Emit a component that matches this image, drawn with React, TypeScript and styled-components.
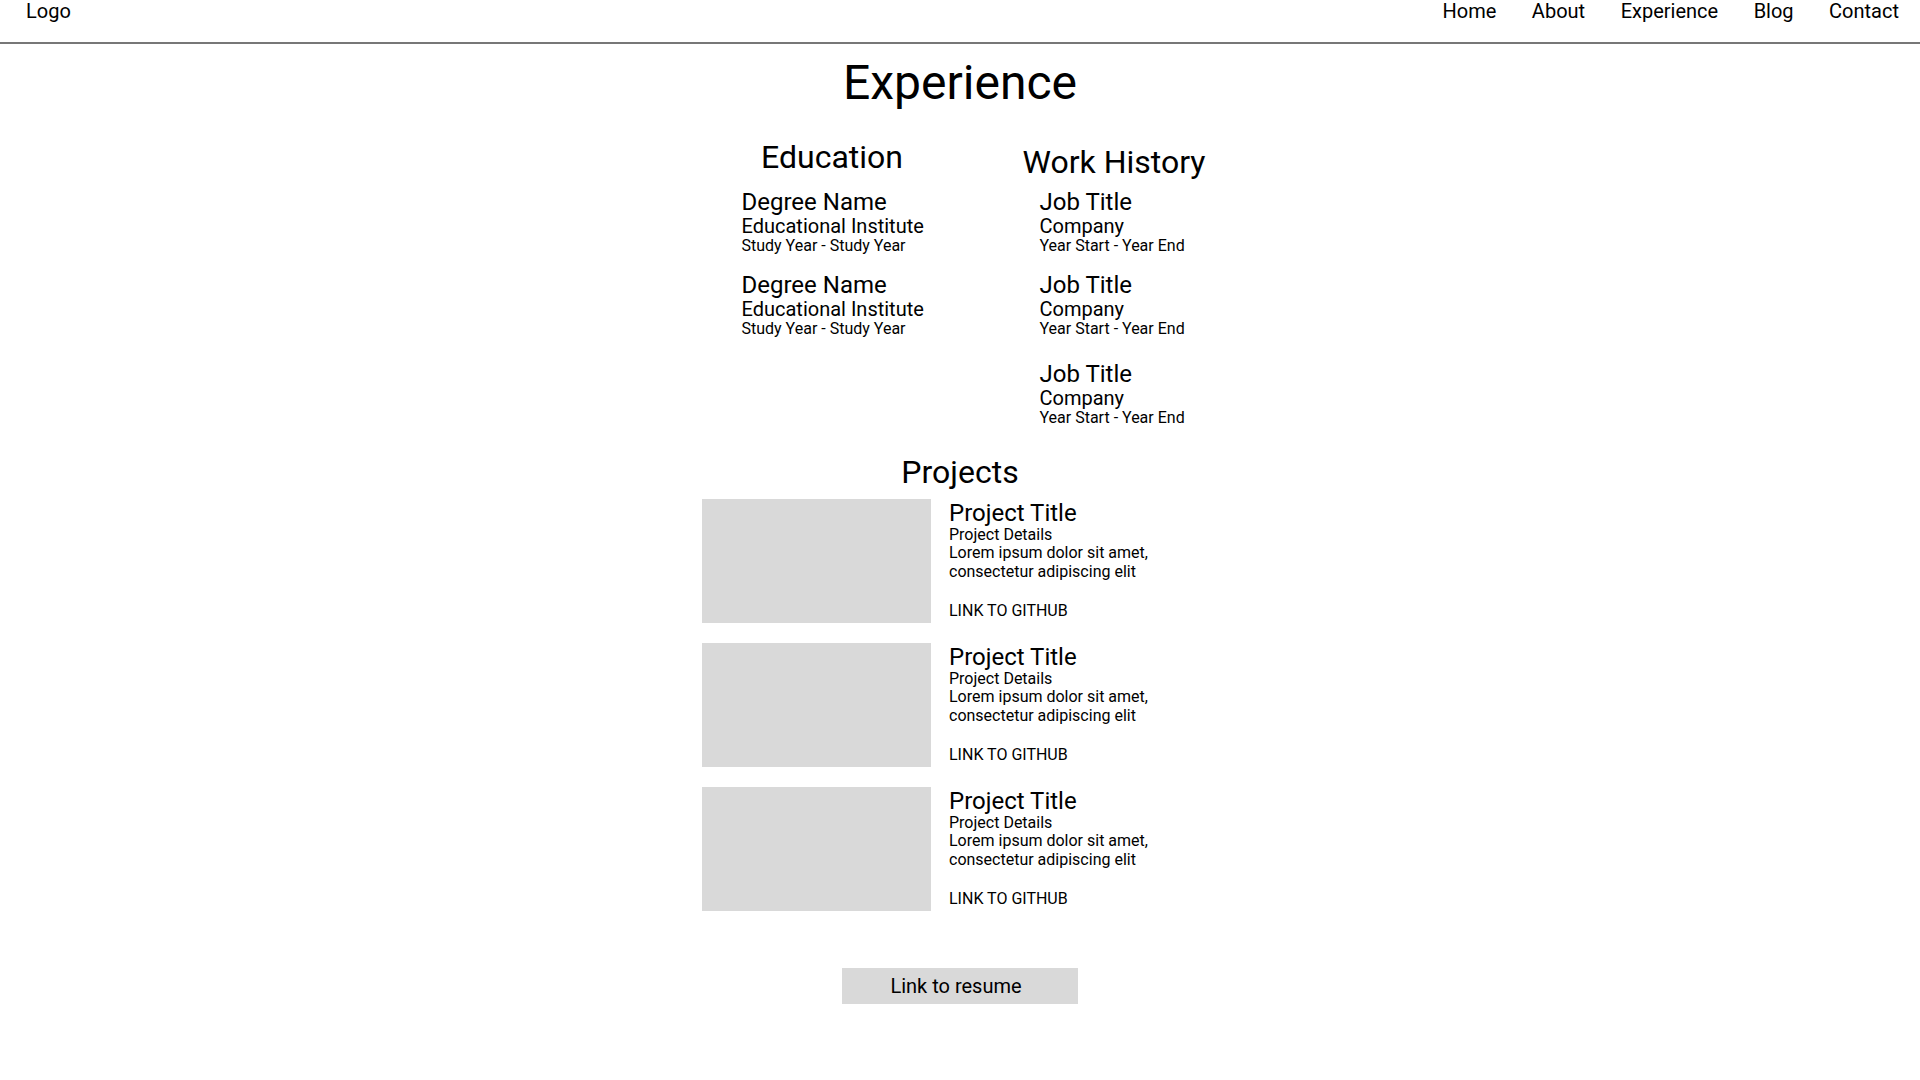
import React from 'react';
import styled, { createGlobalStyle } from 'styled-components';

const GlobalStyle = createGlobalStyle`
  html, body {
    margin: 0;
    padding: 0;
    background: #ffffff;
  }
  body {
    font-family: Roboto, "Liberation Sans", Arial, sans-serif;
    color: #000000;
  }
`;

type Education = { degree: string; institute: string; years: string };
type Job = { title: string; company: string; years: string; extraSpace?: boolean };
type Project = { title: string; details: string; description: string };

const educations: Education[] = [
  { degree: 'Degree Name', institute: 'Educational Institute', years: 'Study Year - Study Year' },
  { degree: 'Degree Name', institute: 'Educational Institute', years: 'Study Year - Study Year' },
];

const jobs: Job[] = [
  { title: 'Job Title', company: 'Company', years: 'Year Start - Year End' },
  { title: 'Job Title', company: 'Company', years: 'Year Start - Year End' },
  { title: 'Job Title', company: 'Company', years: 'Year Start - Year End', extraSpace: true },
];

const projects: Project[] = Array.from({ length: 3 }, () => ({
  title: 'Project Title',
  details: 'Project Details',
  description: 'Lorem ipsum dolor sit amet, consectetur adipiscing elit',
}));

const navLinks = ['Home', 'About', 'Experience', 'Blog', 'Contact'];

const App = () => {
  return (
    <>
      <GlobalStyle />
      <Header>
        <Logo>Logo</Logo>
        <Nav>
          {navLinks.map((link) => (
            <NavLink key={link}>{link}</NavLink>
          ))}
        </Nav>
      </Header>

      <Main>
        <PageTitle>Experience</PageTitle>

        <History>
          <ColumnHeading>Education</ColumnHeading>
          <ColumnHeading $offset={5}>Work History</ColumnHeading>

          <EntryList>
            {educations.map((item, i) => (
              <Entry key={i}>
                <EntryTitle>{item.degree}</EntryTitle>
                <EntrySubtitle>{item.institute}</EntrySubtitle>
                <EntryYears>{item.years}</EntryYears>
              </Entry>
            ))}
          </EntryList>

          <EntryList $indent={17}>
            {jobs.map((item, i) => (
              <Entry key={i} $extraSpace={item.extraSpace}>
                <EntryTitle>{item.title}</EntryTitle>
                <EntrySubtitle>{item.company}</EntrySubtitle>
                <EntryYears>{item.years}</EntryYears>
              </Entry>
            ))}
          </EntryList>
        </History>

        <SectionHeading>Projects</SectionHeading>
        <ProjectList>
          {projects.map((project, i) => (
            <ProjectRow key={i}>
              <ProjectThumb />
              <ProjectInfo>
                <ProjectTitle>{project.title}</ProjectTitle>
                <ProjectText>{project.details}</ProjectText>
                <ProjectDescription>{project.description}</ProjectDescription>
                <GithubLink>LINK TO GITHUB</GithubLink>
              </ProjectInfo>
            </ProjectRow>
          ))}
        </ProjectList>

        <ResumeButton>Link to resume</ResumeButton>
      </Main>
    </>
  );
};

const Header = styled.header`
  display: flex;
  justify-content: space-between;
  align-items: flex-start;
  height: 42px;
  padding: 0 21px 0 26px;
  border-bottom: 2px solid #777777;
`;

const Logo = styled.div`
  font-size: 20px;
  line-height: normal;
  margin-top: -1px;
`;

const Nav = styled.nav`
  display: flex;
  gap: 35.5px;
  margin-top: -1px;
`;

const NavLink = styled.a`
  font-size: 20px;
  line-height: normal;
  color: #000000;
  cursor: pointer;
`;

const Main = styled.main`
  display: flex;
  flex-direction: column;
  align-items: center;
  padding: 10px 0 60px;
`;

const PageTitle = styled.h1`
  margin: 0;
  font-size: 48px;
  font-weight: 400;
  line-height: normal;
`;

const History = styled.section`
  display: grid;
  grid-template-columns: 181px 181px;
  column-gap: 100px;
  row-gap: 7px;
  margin-top: 27px;
  margin-left: 25px;
`;

const ColumnHeading = styled.h2<{ $offset?: number }>`
  margin: ${({ $offset }) => $offset ?? 0}px 0 0;
  font-size: 32px;
  font-weight: 400;
  line-height: normal;
  text-align: center;
  white-space: nowrap;
`;

const EntryList = styled.div<{ $indent?: number }>`
  display: flex;
  flex-direction: column;
  gap: 16px;
  padding-left: ${({ $indent }) => $indent ?? 0}px;
`;

const Entry = styled.div<{ $extraSpace?: boolean }>`
  display: flex;
  flex-direction: column;
  margin-top: ${({ $extraSpace }) => ($extraSpace ? 6 : 0)}px;
  white-space: nowrap;
`;

const EntryTitle = styled.div`
  font-size: 24px;
  line-height: normal;
`;

const EntrySubtitle = styled.div`
  font-size: 20px;
  line-height: normal;
  margin-top: -2px;
`;

const EntryYears = styled.div`
  font-size: 16px;
  line-height: normal;
  margin-top: -2px;
`;

const SectionHeading = styled.h2`
  margin: 26px 0 0;
  font-size: 32px;
  font-weight: 400;
  line-height: normal;
`;

const ProjectList = styled.div`
  display: flex;
  flex-direction: column;
  gap: 20px;
  margin-top: 8px;
  margin-left: 2px;
  width: 518px;
`;

const ProjectRow = styled.div`
  display: flex;
  gap: 18px;
`;

const ProjectThumb = styled.div`
  width: 229px;
  height: 124px;
  flex-shrink: 0;
  background: #d9d9d9;
`;

const ProjectInfo = styled.div`
  display: flex;
  flex-direction: column;
  width: 210px;
`;

const ProjectTitle = styled.div`
  font-size: 24px;
  line-height: normal;
  margin-bottom: -2px;
`;

const ProjectText = styled.div`
  font-size: 16px;
  line-height: normal;
`;

const ProjectDescription = styled.p`
  margin: 0;
  font-size: 16px;
  line-height: 18.75px;
`;

const GithubLink = styled.a`
  margin-top: 19px;
  font-size: 16px;
  line-height: normal;
  color: #000000;
  cursor: pointer;
`;

const ResumeButton = styled.button`
  margin-top: 57px;
  width: 236px;
  height: 36px;
  padding: 0 8px 0 0;
  border: none;
  background: #d9d9d9;
  font-family: Roboto, "Liberation Sans", Arial, sans-serif;
  font-size: 20px;
  color: #000000;
  cursor: pointer;
`;

export default App;
